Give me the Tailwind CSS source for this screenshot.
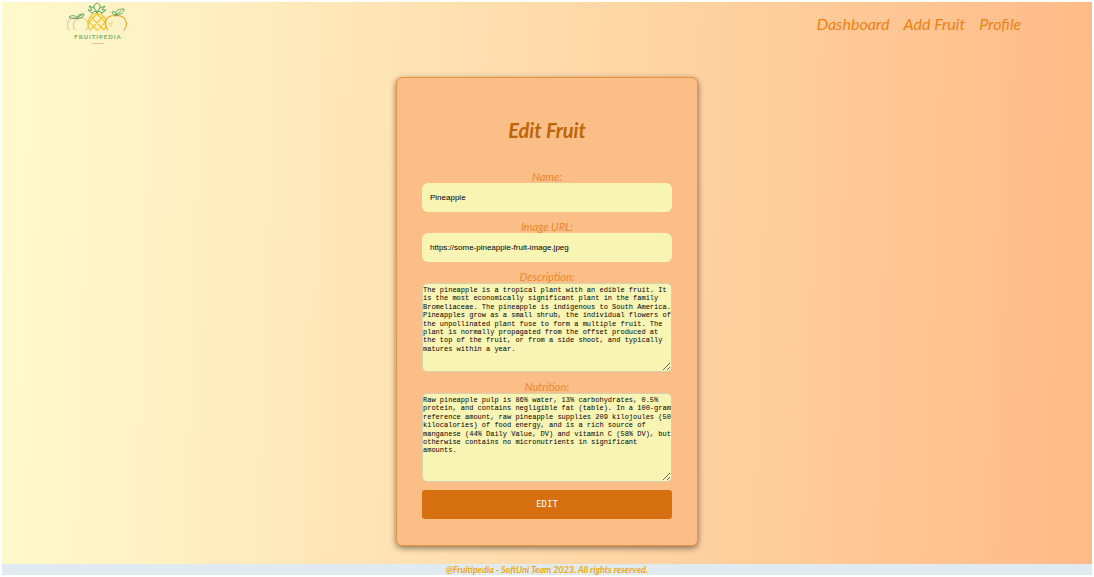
<!DOCTYPE html>
<html lang="en">
<head>
<meta charset="utf-8">
<meta name="viewport" content="width=device-width, initial-scale=1">
<title>Fruitipedia - Edit Fruit</title>
<script src="https://cdn.jsdelivr.net/npm/@tailwindcss/browser@4"></script>
</head>
<body class="min-h-screen bg-white p-[2px] flex flex-col font-['Lato',sans-serif]">
<div class="grow flex flex-col bg-linear-[92deg,#fffacd,#ffba87]">
  <header class="flex items-center justify-between h-[44px] pl-[6%] pr-[6.5%]">
    <a href="#" aria-label="Fruitipedia home">
      <svg class="w-[64px] h-[44px]" viewBox="0 0 64 44" fill="none" stroke-linecap="round" stroke-linejoin="round">
        <g stroke="#f2a08a" stroke-width=".8">
          <path d="M2 28C-1 24 0 17 6 16C9 15.500 10 16 11 17C14 15 20 16 21 21C22 24 21 26 19 28M11 17C6 18 5 24 8 28"/>
        </g>
        <g stroke="#f0c52c" stroke-width="1.100">
          <path d="M23 28C19 22 21 12 30 11.500C39 12 41 21 37 28M24 15L37 28M22 20L30 28M36 15L24 27M38 20L31 28M30 12L38 20M30 12L22 20"/>
        </g>
        <path stroke="#f2a229" stroke-width="1.100" d="M41 28C36 22 38 14 47 13.500C48 14 49 14 50 13.500C59 14 62 22 57 28"/>
        <path stroke="#f2a229" stroke-width=".7" d="M43 21v1M45 20v1M44 23v1"/>
        <g stroke="#55a85c" stroke-width="1">
          <path d="M25 11L21 8L25 8L22 4L27 6L27 3L30 1L33 3L33 6L38 4L35 8L39 8L35 11M25 11L28 9L30 11L32 9L35 11M27 6L30 10L33 6"/>
          <path d="M10 16C10 13 13 12 17 12C17 15 14 17 10 16M10 16C8 17 4 17 2 15C5 13 9 13 10 16M11 15L15 13"/>
          <path d="M49 13C48 9 50 7 57 7C57 11 53 13 49 13M49 13L54 9M49 13C47 13 45 12 45 10C47 9 49 10 49 13"/>
        </g>
        <text x="31" y="37" text-anchor="middle" fill="#6fae62" class="text-[6px] font-bold tracking-[1px]">FRUITIPEDIA</text>
        <path stroke="#f2a98a" stroke-width=".8" d="M25 41.500H36"/>
      </svg>
    </a>
    <nav class="flex gap-[14px] text-[16px] italic text-[#f0810f]">
      <a href="#">Dashboard</a>
      <a href="#">Add Fruit</a>
      <a href="#">Profile</a>
    </nav>
  </header>
  <main class="grow flex justify-center pt-[31px] pb-[18px]">
    <form class="w-[302px] flex flex-col gap-2 rounded-[6px] border border-[#ea9340] bg-[#fbbe87] p-[25px] text-center shadow-[0_2px_6px_rgba(0,0,0,0.5)]">
      <h1 class="pt-[13px] pb-[18px] text-[20px] leading-[28px] font-bold italic text-[#bd6508]">Edit Fruit</h1>
      <div class="flex flex-col">
        <label for="name" class="text-[11px] leading-[13px] italic text-[#f0852a]">Name:</label>
        <input id="name" type="text" value="Pineapple" class="h-[29px] rounded-[6px] bg-[#f8f4b4] px-[8px] font-['Liberation_Sans',sans-serif] text-[8px] text-black">
      </div>
      <div class="flex flex-col">
        <label for="image" class="text-[11px] leading-[13px] italic text-[#f0852a]">Image URL:</label>
        <input id="image" type="text" value="https://some-pineapple-fruit-image.jpeg" class="h-[29px] rounded-[6px] bg-[#f8f4b4] px-[8px] font-['Liberation_Sans',sans-serif] text-[8px] text-black">
      </div>
      <div class="flex flex-col">
        <label for="description" class="text-[11px] leading-[13px] italic text-[#f0852a]">Description:</label>
        <textarea id="description" class="h-[89px] resize rounded-[5px] border border-[#d5d0b0] bg-[#f8f4b4] py-[2px] font-['Liberation_Mono',monospace] text-[7px] leading-[1.2] text-black overflow-hidden">The pineapple is a tropical plant with an edible fruit. It is the most economically significant plant in the family Bromeliaceae. The pineapple is indigenous to South America. Pineapples grow as a small shrub, the individual flowers of the unpollinated plant fuse to form a multiple fruit. The plant is normally propagated from the offset produced at the top of the fruit, or from a side shoot, and typically matures within a year.</textarea>
      </div>
      <div class="flex flex-col">
        <label for="nutrition" class="text-[11px] leading-[13px] italic text-[#f0852a]">Nutrition:</label>
        <textarea id="nutrition" class="h-[89px] resize rounded-[5px] border border-[#d5d0b0] bg-[#f8f4b4] py-[2px] font-['Liberation_Mono',monospace] text-[7px] leading-[1.2] text-black overflow-hidden">Raw pineapple pulp is 86% water, 13% carbohydrates, 0.5% protein, and contains negligible fat (table). In a 100-gram reference amount, raw pineapple supplies 209 kilojoules (50 kilocalories) of food energy, and is a rich source of manganese (44% Daily Value, DV) and vitamin C (58% DV), but otherwise contains no micronutrients in significant amounts.</textarea>
      </div>
      <button type="submit" class="h-[29px] rounded-[3px] bg-[#d66f0f] font-['DejaVu_Sans_Mono',monospace] text-[9px] text-white">EDIT</button>
    </form>
  </main>
</div>
<footer class="bg-[#e0ebf1] text-center text-[9px] leading-[11px] font-bold italic text-[#f0a80c]">@Fruitipedia - SoftUni Team 2023. All rights reserved.</footer>
</body>
</html>
